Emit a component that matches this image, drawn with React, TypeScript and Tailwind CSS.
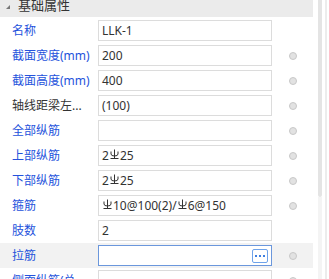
import React from 'react';

const Rebar = () => (
  <svg width="9" height="10" viewBox="0 0 9 10" className="inline-block align-top -mt-[1px] mx-[1px]" fill="none" stroke="#333" strokeWidth="1">
    <path d="M4.5 0.5 V9.5" />
    <path d="M1 2.5 V5 Q1 7 4.5 7 Q8 7 8 5 V2.5" />
    <path d="M0.5 9.5 H8.5" />
  </svg>
);

type Row = { label: string; value: React.ReactNode; blue?: boolean; dot?: boolean; active?: boolean };

const rows: Row[] = [
  { label: '名称', value: 'LLK-1', blue: true },
  { label: '截面宽度(mm)', value: '200', blue: true, dot: true },
  { label: '截面高度(mm)', value: '400', blue: true, dot: true },
  { label: '轴线距梁左...', value: '(100)', dot: true },
  { label: '全部纵筋', value: '', blue: true, dot: true },
  { label: '上部纵筋', value: <>2<Rebar />25</>, blue: true, dot: true },
  { label: '下部纵筋', value: <>2<Rebar />25</>, blue: true, dot: true },
  { label: '箍筋', value: <><Rebar />10@100(2)/<Rebar />6@150</>, blue: true, dot: true },
  { label: '肢数', value: '2', blue: true },
  { label: '拉筋', value: '', blue: true, dot: true, active: true },
  { label: '侧面纵筋(总...', value: '', blue: true, dot: true },
];

export default function App() {
  return (
    <div className="w-[329px] h-[279px] overflow-hidden bg-white flex text-[12px] text-[#333]" style={{ fontFamily: '"Noto Sans", "Noto Sans CJK SC", sans-serif' }}>
      <div className="w-[313px] flex flex-col">
        <div className="h-[24px] -mt-[7px] bg-[#ebebeb] flex items-center shrink-0">
          <svg width="6" height="6" viewBox="0 0 6 6" className="ml-[5px] mt-[4px]">
            <path d="M5 1 L5 5 L1 5 Z" fill="#777" />
          </svg>
          <span className="ml-[7px] text-[13px] leading-none text-[#333]">基础属性</span>
        </div>
        <div className="mt-[1px] flex flex-col">
          {rows.map((r, i) => (
            <div key={i} className={`h-[25px] flex items-center shrink-0 ${r.active ? 'bg-[#f2f2f2]' : ''}`}>
              <div className={`w-[98px] pl-[12px] whitespace-nowrap overflow-hidden ${r.blue ? 'text-[#2452dc]' : 'text-[#333]'}`}>{r.label}</div>
              <div className={`w-[174px] h-[21px] bg-white border flex items-center pl-[3px] pr-[3px] whitespace-nowrap overflow-hidden ${r.active ? 'border-[#6b97dc]' : 'border-[#dcdcdc]'}`}>
                <span className="flex-1 leading-none">{r.value}</span>
                {r.active && (
                  <div className="w-[16px] h-[14px] border border-[#6fa3ea] rounded-[2px] flex items-center justify-center gap-[2px]">
                    <span className="w-[2px] h-[2px] bg-[#3f7fe0]" />
                    <span className="w-[2px] h-[2px] bg-[#3f7fe0]" />
                    <span className="w-[2px] h-[2px] bg-[#3f7fe0]" />
                  </div>
                )}
              </div>
              <div className="flex-1 flex justify-center">
                {r.dot && <span className="w-[8px] h-[8px] rounded-full bg-[#e2e2e2] border border-[#c8c8c8]" />}
              </div>
            </div>
          ))}
        </div>
      </div>
      <div className="w-[5px]" />
      <div className="w-[4px] flex flex-col">
        <div className="h-[197px] bg-[#e4e4e4] rounded-b-[2px]" />
        <div className="flex-1 bg-[#f4f4f4]" />
      </div>
      <div className="w-[3px]" />
      <div className="w-[2px] bg-[#ececec]" />
    </div>
  );
}
